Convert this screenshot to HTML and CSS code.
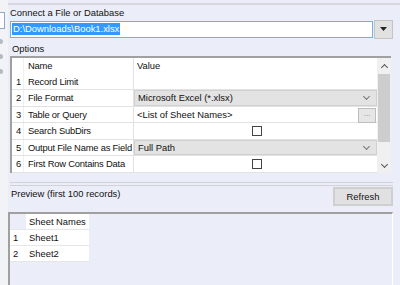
FILE: index.html
```html
<!DOCTYPE html>
<html lang="en">
<head>
  <meta charset="UTF-8">
  <title>Input Data</title>
  <link rel="stylesheet" href="styles.css">
</head>
<body>
  <div class="app">
    <!-- clipped tool strip on the left -->
    <div class="tools">
      <div class="tool-box"></div>
      <div class="tool-dot"></div>
      <div class="tool-dot"></div>
      <div class="tool-dot"></div>
    </div>

    <div class="panel">
      <div class="label">Connect a File or Database</div>
      <div class="connect">
        <div class="path"><span class="sel">D:\Downloads\Book1.xlsx</span></div>
        <div class="drop-btn">
          <svg width="7" height="4" viewBox="0 0 7 4"><path d="M0 0h7L3.5 4z" fill="#222"/></svg>
        </div>
      </div>

      <div class="label options-label">Options</div>
      <div class="options">
        <div class="opt-table">
          <div class="row head">
            <div class="idx"></div>
            <div class="name">Name</div>
            <div class="value">Value</div>
          </div>
          <div class="row first">
            <div class="idx">1</div>
            <div class="name">Record Limit</div>
            <div class="value"></div>
          </div>
          <div class="row tall">
            <div class="idx">2</div>
            <div class="name">File Format</div>
            <div class="value combo">Microsoft Excel (*.xlsx)<span class="chev"></span></div>
          </div>
          <div class="row">
            <div class="idx">3</div>
            <div class="name">Table or Query</div>
            <div class="value">&lt;List of Sheet Names&gt;<span class="dots">...</span></div>
          </div>
          <div class="row tall">
            <div class="idx">4</div>
            <div class="name">Search SubDirs</div>
            <div class="value center"><span class="check"></span></div>
          </div>
          <div class="row">
            <div class="idx">5</div>
            <div class="name">Output File Name as Field</div>
            <div class="value combo">Full Path<span class="chev"></span></div>
          </div>
          <div class="row tall">
            <div class="idx">6</div>
            <div class="name">First Row Contains Data</div>
            <div class="value center"><span class="check"></span></div>
          </div>
        </div>
        <div class="scrollbar">
          <span class="arrow up"></span>
          <div class="thumb"></div>
          <span class="arrow down"></span>
        </div>
      </div>

      <div class="splitter"></div>

      <div class="preview-bar">
        <div class="label">Preview (first 100 records)</div>
        <button class="refresh">Refresh</button>
      </div>

      <div class="preview">
        <table class="sheets">
          <tr><th></th><th>Sheet Names</th></tr>
          <tr><td>1</td><td>Sheet1</td></tr>
          <tr><td>2</td><td>Sheet2</td></tr>
        </table>
      </div>
    </div>
  </div>
</body>
</html>
```

FILE: styles.css
```css
body {
  margin: 0;
  background-color: #ebeef8;
  font-family: "Liberation Sans", Arial, sans-serif;
  font-size: 9.4px;
  color: #111;
  overflow: hidden;
}
.app {
  display: flex;
  height: 285px;
}
.tools {
  width: 8px;
  background-color: #f2f3f7;
  display: flex;
  flex-direction: column;
  align-items: flex-start;
  padding-top: 12px;
  gap: 10px;
}
.tool-box {
  width: 4px;
  height: 15px;
  border: 1px solid #8fa6c4;
  border-left: none;
  background-color: #fff;
}
.tool-dot {
  width: 3px;
  height: 5px;
  border-radius: 0 3px 3px 0;
  background-color: #b4bac6;
}
.panel {
  flex: 1;
  margin-top: 3px;
  border-top: 2px solid #d6d8de;
  padding: 0 7px 0 2px;
  display: flex;
  flex-direction: column;
}
.label {
  height: 15px;
  line-height: 16px;
  white-space: nowrap;
}
.connect {
  display: flex;
  align-items: center;
  height: 18px;
}
.path {
  flex: 1;
  height: 15px;
  border: 1px solid #7aaee0;
  background-color: #fff;
  display: flex;
  align-items: center;
  padding-left: 1px;
}
.sel {
  background-color: #3399ff;
  color: #fff;
  line-height: 12px;
  padding: 0 1px;
}
.drop-btn {
  width: 17px;
  height: 17px;
  margin-left: 1px;
  border: 1px solid #c4c4c4;
  background-color: #e1e1e1;
  display: flex;
  align-items: center;
  justify-content: center;
}
.options-label {
  margin-top: 3px;
  padding-left: 2px;
}
.options {
  display: flex;
  height: 115px;
  border-top: 2px solid #a0a0a0;
  border-left: 2px solid #a0a0a0;
  background-color: #fff;
  margin-right: 2px;
}
.opt-table {
  flex: 1;
  display: flex;
  flex-direction: column;
}
.row {
  display: flex;
  height: 15px;
  border-bottom: 1px solid #e2e2e2;
}
.row.tall {
  height: 16px;
}
.row.head {
  height: 16px;
  border-bottom: none;
}
.idx {
  width: 7px;
  padding-left: 4px;
  line-height: 16px;
  border-right: 1px solid #f0f0f0;
}
.name {
  width: 105px;
  padding-left: 4px;
  line-height: 16px;
  letter-spacing: -0.2px;
  border-right: 1px solid #e2e2e2;
  white-space: nowrap;
}
.value {
  flex: 1;
  position: relative;
  padding-left: 3px;
  line-height: 16px;
  white-space: nowrap;
}
.value.combo {
  background-color: #e3e3e3;
  border: 1px solid #d0d0d0;
  line-height: 14px;
}
.value.center {
  display: flex;
  align-items: center;
  justify-content: center;
}
.chev {
  position: absolute;
  right: 7px;
  top: 3px;
  width: 4px;
  height: 4px;
  border-right: 1px solid #777;
  border-bottom: 1px solid #777;
  transform: rotate(45deg);
}
.dots {
  position: absolute;
  right: 1px;
  top: 1px;
  width: 16px;
  height: 13px;
  line-height: 9px;
  text-align: center;
  border: 1px solid #bdbdbd;
  background-color: #e6e6e6;
  color: #8a6f9a;
  font-size: 8px;
}
.check {
  width: 10px;
  height: 10px;
  border: 1px solid #444;
  background-color: #fff;
  box-sizing: border-box;
}
.scrollbar {
  width: 14px;
  background-color: #f0f0f0;
  display: flex;
  flex-direction: column;
  align-items: center;
}
.arrow {
  width: 4px;
  height: 4px;
  border-left: 1px solid #555;
  border-top: 1px solid #555;
  margin: 7px 0 4px;
}
.arrow.up {
  transform: rotate(45deg);
}
.arrow.down {
  transform: rotate(225deg);
  margin: auto 0 6px;
}
.thumb {
  width: 12px;
  height: 68px;
  background-color: #cdcdcd;
}
.splitter {
  height: 2px;
  margin-top: 9px;
  border-top: 1px solid #d0d2d8;
  border-bottom: 1px solid #d0d2d8;
}
.preview-bar {
  display: flex;
  justify-content: space-between;
  align-items: flex-start;
  margin-top: 1px;
}
.preview-bar .label {
  line-height: 10px;
  margin-top: 2px;
  padding-left: 1px;
}
.refresh {
  width: 60px;
  height: 19px;
  border: 2px solid #cfcfcf;
  background-color: #e1e1e1;
  font-family: inherit;
  font-size: 9.4px;
  color: #111;
  padding: 0;
}
.preview {
  flex: 1;
  margin-top: 6px;
  margin-left: -2px;
  border-top: 2px solid #a0a0a0;
  border-left: 2px solid #a0a0a0;
  border-right: 1px solid #fff;
}
.sheets {
  border-collapse: collapse;
}
.sheets th,
.sheets td {
  height: 15px;
  padding: 0 3px;
  font-weight: normal;
  text-align: left;
  white-space: nowrap;
  border-bottom: 1px solid #e6e6e6;
}
.sheets td {
  background-color: #fff;
}
.sheets th:last-child {
  background-color: #fff;
}
.sheets td:first-child,
.sheets th:first-child {
  width: 10px;
}
.sheets td:last-child,
.sheets th:last-child {
  width: 54px;
}
```
